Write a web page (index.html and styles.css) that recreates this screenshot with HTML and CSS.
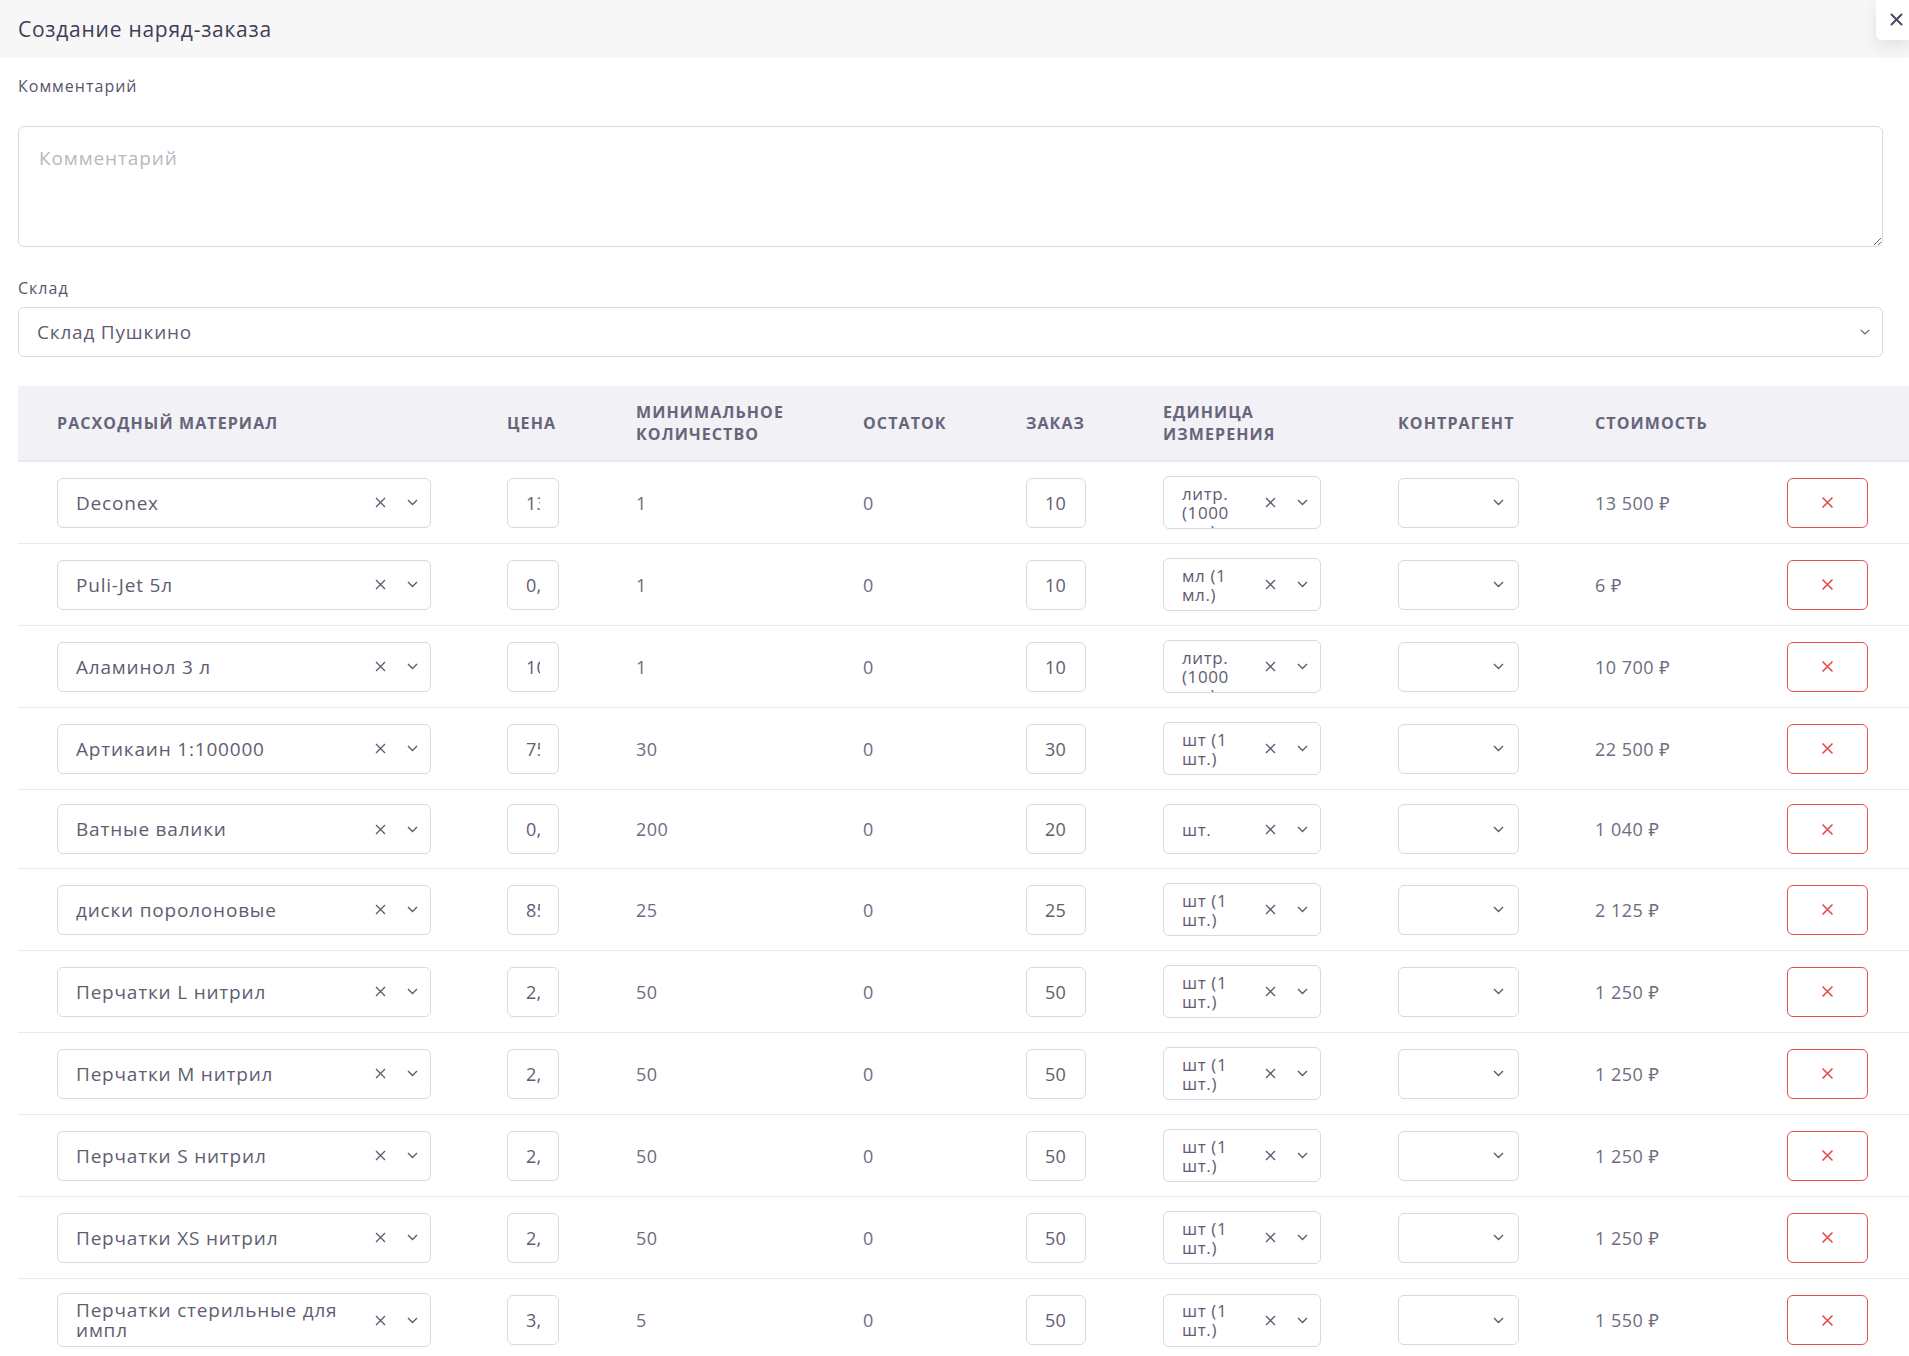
FILE: index.html
```html
<!DOCTYPE html>
<html lang="ru">
<head>
<meta charset="utf-8">
<title>Создание наряд-заказа</title>
<link rel="stylesheet" href="styles.css">
</head>
<body>
<div class="modal">
  <div class="modal-header">
    <h1 class="modal-title">Создание наряд-заказа</h1>
  </div>
  <button class="close-btn" type="button" aria-label="Закрыть">
    <svg width="13" height="13" viewBox="0 0 13 13"><path d="M1.5 1.5L11.5 11.5M11.5 1.5L1.5 11.5" stroke="currentColor" stroke-width="2" stroke-linecap="round"/></svg>
  </button>

  <div class="modal-body">
    <label class="field-label">Комментарий</label>
    <textarea class="textarea" placeholder="Комментарий"></textarea>

    <label class="field-label field-label--stock">Склад</label>
    <div class="select select--wide">
      <span class="select-value">Склад Пушкино</span>
      <span class="chevron chevron--wide"><svg width="13" height="8" viewBox="0 0 13 8"><path d="M1 1.2L6.5 6.5L12 1.2" fill="none" stroke="currentColor" stroke-width="1.5"/></svg></span>
    </div>

    <div class="table">
      <div class="trow thead">
        <div class="th">Расходный материал</div>
        <div class="th">Цена</div>
        <div class="th">Минимальное<br>количество</div>
        <div class="th">Остаток</div>
        <div class="th">Заказ</div>
        <div class="th">Единица<br>измерения</div>
        <div class="th">Контрагент</div>
        <div class="th">Стоимость</div>
        <div class="th"></div>
      </div>

      <div class="trow">
        <div class="td"><div class="select sel-mat"><span class="select-value">Deconex</span><span class="clear"><svg width="11" height="11" viewBox="0 0 11 11"><path d="M1 1L10 10M10 1L1 10" stroke="currentColor" stroke-width="1.3"/></svg></span><span class="chevron"><svg width="11" height="7" viewBox="0 0 11 7"><path d="M1 1L5.5 5.5L10 1" fill="none" stroke="currentColor" stroke-width="1.4"/></svg></span></div></div>
        <div class="td"><input class="num num--price" value="1350"></div>
        <div class="td val">1</div>
        <div class="td val">0</div>
        <div class="td"><input class="num num--order" value="10"></div>
        <div class="td"><div class="select sel-unit"><span class="select-value unit-value">литр. (1000 мл.)</span><span class="clear"><svg width="11" height="11" viewBox="0 0 11 11"><path d="M1 1L10 10M10 1L1 10" stroke="currentColor" stroke-width="1.3"/></svg></span><span class="chevron"><svg width="11" height="7" viewBox="0 0 11 7"><path d="M1 1L5.5 5.5L10 1" fill="none" stroke="currentColor" stroke-width="1.4"/></svg></span></div></div>
        <div class="td"><div class="select sel-agent"><span class="select-value"></span><span class="chevron"><svg width="11" height="7" viewBox="0 0 11 7"><path d="M1 1L5.5 5.5L10 1" fill="none" stroke="currentColor" stroke-width="1.4"/></svg></span></div></div>
        <div class="td val">13 500 ₽</div>
        <div class="td"><button class="del-btn" type="button"><svg width="13" height="13" viewBox="0 0 13 13"><path d="M1.5 1.5L11.5 11.5M11.5 1.5L1.5 11.5" stroke="currentColor" stroke-width="1.6"/></svg></button></div>
      </div>

      <div class="trow">
        <div class="td"><div class="select sel-mat"><span class="select-value">Puli-Jet 5л</span><span class="clear"><svg width="11" height="11" viewBox="0 0 11 11"><path d="M1 1L10 10M10 1L1 10" stroke="currentColor" stroke-width="1.3"/></svg></span><span class="chevron"><svg width="11" height="7" viewBox="0 0 11 7"><path d="M1 1L5.5 5.5L10 1" fill="none" stroke="currentColor" stroke-width="1.4"/></svg></span></div></div>
        <div class="td"><input class="num num--price" value="0,6"></div>
        <div class="td val">1</div>
        <div class="td val">0</div>
        <div class="td"><input class="num num--order" value="10"></div>
        <div class="td"><div class="select sel-unit"><span class="select-value unit-value">мл (1 мл.)</span><span class="clear"><svg width="11" height="11" viewBox="0 0 11 11"><path d="M1 1L10 10M10 1L1 10" stroke="currentColor" stroke-width="1.3"/></svg></span><span class="chevron"><svg width="11" height="7" viewBox="0 0 11 7"><path d="M1 1L5.5 5.5L10 1" fill="none" stroke="currentColor" stroke-width="1.4"/></svg></span></div></div>
        <div class="td"><div class="select sel-agent"><span class="select-value"></span><span class="chevron"><svg width="11" height="7" viewBox="0 0 11 7"><path d="M1 1L5.5 5.5L10 1" fill="none" stroke="currentColor" stroke-width="1.4"/></svg></span></div></div>
        <div class="td val">6 ₽</div>
        <div class="td"><button class="del-btn" type="button"><svg width="13" height="13" viewBox="0 0 13 13"><path d="M1.5 1.5L11.5 11.5M11.5 1.5L1.5 11.5" stroke="currentColor" stroke-width="1.6"/></svg></button></div>
      </div>

      <div class="trow">
        <div class="td"><div class="select sel-mat"><span class="select-value">Аламинол 3 л</span><span class="clear"><svg width="11" height="11" viewBox="0 0 11 11"><path d="M1 1L10 10M10 1L1 10" stroke="currentColor" stroke-width="1.3"/></svg></span><span class="chevron"><svg width="11" height="7" viewBox="0 0 11 7"><path d="M1 1L5.5 5.5L10 1" fill="none" stroke="currentColor" stroke-width="1.4"/></svg></span></div></div>
        <div class="td"><input class="num num--price" value="1070"></div>
        <div class="td val">1</div>
        <div class="td val">0</div>
        <div class="td"><input class="num num--order" value="10"></div>
        <div class="td"><div class="select sel-unit"><span class="select-value unit-value">литр. (1000 мл.)</span><span class="clear"><svg width="11" height="11" viewBox="0 0 11 11"><path d="M1 1L10 10M10 1L1 10" stroke="currentColor" stroke-width="1.3"/></svg></span><span class="chevron"><svg width="11" height="7" viewBox="0 0 11 7"><path d="M1 1L5.5 5.5L10 1" fill="none" stroke="currentColor" stroke-width="1.4"/></svg></span></div></div>
        <div class="td"><div class="select sel-agent"><span class="select-value"></span><span class="chevron"><svg width="11" height="7" viewBox="0 0 11 7"><path d="M1 1L5.5 5.5L10 1" fill="none" stroke="currentColor" stroke-width="1.4"/></svg></span></div></div>
        <div class="td val">10 700 ₽</div>
        <div class="td"><button class="del-btn" type="button"><svg width="13" height="13" viewBox="0 0 13 13"><path d="M1.5 1.5L11.5 11.5M11.5 1.5L1.5 11.5" stroke="currentColor" stroke-width="1.6"/></svg></button></div>
      </div>

      <div class="trow">
        <div class="td"><div class="select sel-mat"><span class="select-value">Артикаин 1:100000</span><span class="clear"><svg width="11" height="11" viewBox="0 0 11 11"><path d="M1 1L10 10M10 1L1 10" stroke="currentColor" stroke-width="1.3"/></svg></span><span class="chevron"><svg width="11" height="7" viewBox="0 0 11 7"><path d="M1 1L5.5 5.5L10 1" fill="none" stroke="currentColor" stroke-width="1.4"/></svg></span></div></div>
        <div class="td"><input class="num num--price" value="750"></div>
        <div class="td val">30</div>
        <div class="td val">0</div>
        <div class="td"><input class="num num--order" value="300"></div>
        <div class="td"><div class="select sel-unit"><span class="select-value unit-value">шт (1 шт.)</span><span class="clear"><svg width="11" height="11" viewBox="0 0 11 11"><path d="M1 1L10 10M10 1L1 10" stroke="currentColor" stroke-width="1.3"/></svg></span><span class="chevron"><svg width="11" height="7" viewBox="0 0 11 7"><path d="M1 1L5.5 5.5L10 1" fill="none" stroke="currentColor" stroke-width="1.4"/></svg></span></div></div>
        <div class="td"><div class="select sel-agent"><span class="select-value"></span><span class="chevron"><svg width="11" height="7" viewBox="0 0 11 7"><path d="M1 1L5.5 5.5L10 1" fill="none" stroke="currentColor" stroke-width="1.4"/></svg></span></div></div>
        <div class="td val">22 500 ₽</div>
        <div class="td"><button class="del-btn" type="button"><svg width="13" height="13" viewBox="0 0 13 13"><path d="M1.5 1.5L11.5 11.5M11.5 1.5L1.5 11.5" stroke="currentColor" stroke-width="1.6"/></svg></button></div>
      </div>

      <div class="trow">
        <div class="td"><div class="select sel-mat"><span class="select-value">Ватные валики</span><span class="clear"><svg width="11" height="11" viewBox="0 0 11 11"><path d="M1 1L10 10M10 1L1 10" stroke="currentColor" stroke-width="1.3"/></svg></span><span class="chevron"><svg width="11" height="7" viewBox="0 0 11 7"><path d="M1 1L5.5 5.5L10 1" fill="none" stroke="currentColor" stroke-width="1.4"/></svg></span></div></div>
        <div class="td"><input class="num num--price" value="0,52"></div>
        <div class="td val">200</div>
        <div class="td val">0</div>
        <div class="td"><input class="num num--order" value="2000"></div>
        <div class="td"><div class="select sel-unit"><span class="select-value unit-value">шт.</span><span class="clear"><svg width="11" height="11" viewBox="0 0 11 11"><path d="M1 1L10 10M10 1L1 10" stroke="currentColor" stroke-width="1.3"/></svg></span><span class="chevron"><svg width="11" height="7" viewBox="0 0 11 7"><path d="M1 1L5.5 5.5L10 1" fill="none" stroke="currentColor" stroke-width="1.4"/></svg></span></div></div>
        <div class="td"><div class="select sel-agent"><span class="select-value"></span><span class="chevron"><svg width="11" height="7" viewBox="0 0 11 7"><path d="M1 1L5.5 5.5L10 1" fill="none" stroke="currentColor" stroke-width="1.4"/></svg></span></div></div>
        <div class="td val">1 040 ₽</div>
        <div class="td"><button class="del-btn" type="button"><svg width="13" height="13" viewBox="0 0 13 13"><path d="M1.5 1.5L11.5 11.5M11.5 1.5L1.5 11.5" stroke="currentColor" stroke-width="1.6"/></svg></button></div>
      </div>

      <div class="trow">
        <div class="td"><div class="select sel-mat"><span class="select-value">диски поролоновые</span><span class="clear"><svg width="11" height="11" viewBox="0 0 11 11"><path d="M1 1L10 10M10 1L1 10" stroke="currentColor" stroke-width="1.3"/></svg></span><span class="chevron"><svg width="11" height="7" viewBox="0 0 11 7"><path d="M1 1L5.5 5.5L10 1" fill="none" stroke="currentColor" stroke-width="1.4"/></svg></span></div></div>
        <div class="td"><input class="num num--price" value="85"></div>
        <div class="td val">25</div>
        <div class="td val">0</div>
        <div class="td"><input class="num num--order" value="25"></div>
        <div class="td"><div class="select sel-unit"><span class="select-value unit-value">шт (1 шт.)</span><span class="clear"><svg width="11" height="11" viewBox="0 0 11 11"><path d="M1 1L10 10M10 1L1 10" stroke="currentColor" stroke-width="1.3"/></svg></span><span class="chevron"><svg width="11" height="7" viewBox="0 0 11 7"><path d="M1 1L5.5 5.5L10 1" fill="none" stroke="currentColor" stroke-width="1.4"/></svg></span></div></div>
        <div class="td"><div class="select sel-agent"><span class="select-value"></span><span class="chevron"><svg width="11" height="7" viewBox="0 0 11 7"><path d="M1 1L5.5 5.5L10 1" fill="none" stroke="currentColor" stroke-width="1.4"/></svg></span></div></div>
        <div class="td val">2 125 ₽</div>
        <div class="td"><button class="del-btn" type="button"><svg width="13" height="13" viewBox="0 0 13 13"><path d="M1.5 1.5L11.5 11.5M11.5 1.5L1.5 11.5" stroke="currentColor" stroke-width="1.6"/></svg></button></div>
      </div>

      <div class="trow">
        <div class="td"><div class="select sel-mat"><span class="select-value">Перчатки L нитрил</span><span class="clear"><svg width="11" height="11" viewBox="0 0 11 11"><path d="M1 1L10 10M10 1L1 10" stroke="currentColor" stroke-width="1.3"/></svg></span><span class="chevron"><svg width="11" height="7" viewBox="0 0 11 7"><path d="M1 1L5.5 5.5L10 1" fill="none" stroke="currentColor" stroke-width="1.4"/></svg></span></div></div>
        <div class="td"><input class="num num--price" value="2,5"></div>
        <div class="td val">50</div>
        <div class="td val">0</div>
        <div class="td"><input class="num num--order" value="500"></div>
        <div class="td"><div class="select sel-unit"><span class="select-value unit-value">шт (1 шт.)</span><span class="clear"><svg width="11" height="11" viewBox="0 0 11 11"><path d="M1 1L10 10M10 1L1 10" stroke="currentColor" stroke-width="1.3"/></svg></span><span class="chevron"><svg width="11" height="7" viewBox="0 0 11 7"><path d="M1 1L5.5 5.5L10 1" fill="none" stroke="currentColor" stroke-width="1.4"/></svg></span></div></div>
        <div class="td"><div class="select sel-agent"><span class="select-value"></span><span class="chevron"><svg width="11" height="7" viewBox="0 0 11 7"><path d="M1 1L5.5 5.5L10 1" fill="none" stroke="currentColor" stroke-width="1.4"/></svg></span></div></div>
        <div class="td val">1 250 ₽</div>
        <div class="td"><button class="del-btn" type="button"><svg width="13" height="13" viewBox="0 0 13 13"><path d="M1.5 1.5L11.5 11.5M11.5 1.5L1.5 11.5" stroke="currentColor" stroke-width="1.6"/></svg></button></div>
      </div>

      <div class="trow">
        <div class="td"><div class="select sel-mat"><span class="select-value">Перчатки M нитрил</span><span class="clear"><svg width="11" height="11" viewBox="0 0 11 11"><path d="M1 1L10 10M10 1L1 10" stroke="currentColor" stroke-width="1.3"/></svg></span><span class="chevron"><svg width="11" height="7" viewBox="0 0 11 7"><path d="M1 1L5.5 5.5L10 1" fill="none" stroke="currentColor" stroke-width="1.4"/></svg></span></div></div>
        <div class="td"><input class="num num--price" value="2,5"></div>
        <div class="td val">50</div>
        <div class="td val">0</div>
        <div class="td"><input class="num num--order" value="500"></div>
        <div class="td"><div class="select sel-unit"><span class="select-value unit-value">шт (1 шт.)</span><span class="clear"><svg width="11" height="11" viewBox="0 0 11 11"><path d="M1 1L10 10M10 1L1 10" stroke="currentColor" stroke-width="1.3"/></svg></span><span class="chevron"><svg width="11" height="7" viewBox="0 0 11 7"><path d="M1 1L5.5 5.5L10 1" fill="none" stroke="currentColor" stroke-width="1.4"/></svg></span></div></div>
        <div class="td"><div class="select sel-agent"><span class="select-value"></span><span class="chevron"><svg width="11" height="7" viewBox="0 0 11 7"><path d="M1 1L5.5 5.5L10 1" fill="none" stroke="currentColor" stroke-width="1.4"/></svg></span></div></div>
        <div class="td val">1 250 ₽</div>
        <div class="td"><button class="del-btn" type="button"><svg width="13" height="13" viewBox="0 0 13 13"><path d="M1.5 1.5L11.5 11.5M11.5 1.5L1.5 11.5" stroke="currentColor" stroke-width="1.6"/></svg></button></div>
      </div>

      <div class="trow">
        <div class="td"><div class="select sel-mat"><span class="select-value">Перчатки S нитрил</span><span class="clear"><svg width="11" height="11" viewBox="0 0 11 11"><path d="M1 1L10 10M10 1L1 10" stroke="currentColor" stroke-width="1.3"/></svg></span><span class="chevron"><svg width="11" height="7" viewBox="0 0 11 7"><path d="M1 1L5.5 5.5L10 1" fill="none" stroke="currentColor" stroke-width="1.4"/></svg></span></div></div>
        <div class="td"><input class="num num--price" value="2,5"></div>
        <div class="td val">50</div>
        <div class="td val">0</div>
        <div class="td"><input class="num num--order" value="500"></div>
        <div class="td"><div class="select sel-unit"><span class="select-value unit-value">шт (1 шт.)</span><span class="clear"><svg width="11" height="11" viewBox="0 0 11 11"><path d="M1 1L10 10M10 1L1 10" stroke="currentColor" stroke-width="1.3"/></svg></span><span class="chevron"><svg width="11" height="7" viewBox="0 0 11 7"><path d="M1 1L5.5 5.5L10 1" fill="none" stroke="currentColor" stroke-width="1.4"/></svg></span></div></div>
        <div class="td"><div class="select sel-agent"><span class="select-value"></span><span class="chevron"><svg width="11" height="7" viewBox="0 0 11 7"><path d="M1 1L5.5 5.5L10 1" fill="none" stroke="currentColor" stroke-width="1.4"/></svg></span></div></div>
        <div class="td val">1 250 ₽</div>
        <div class="td"><button class="del-btn" type="button"><svg width="13" height="13" viewBox="0 0 13 13"><path d="M1.5 1.5L11.5 11.5M11.5 1.5L1.5 11.5" stroke="currentColor" stroke-width="1.6"/></svg></button></div>
      </div>

      <div class="trow">
        <div class="td"><div class="select sel-mat"><span class="select-value">Перчатки XS нитрил</span><span class="clear"><svg width="11" height="11" viewBox="0 0 11 11"><path d="M1 1L10 10M10 1L1 10" stroke="currentColor" stroke-width="1.3"/></svg></span><span class="chevron"><svg width="11" height="7" viewBox="0 0 11 7"><path d="M1 1L5.5 5.5L10 1" fill="none" stroke="currentColor" stroke-width="1.4"/></svg></span></div></div>
        <div class="td"><input class="num num--price" value="2,5"></div>
        <div class="td val">50</div>
        <div class="td val">0</div>
        <div class="td"><input class="num num--order" value="500"></div>
        <div class="td"><div class="select sel-unit"><span class="select-value unit-value">шт (1 шт.)</span><span class="clear"><svg width="11" height="11" viewBox="0 0 11 11"><path d="M1 1L10 10M10 1L1 10" stroke="currentColor" stroke-width="1.3"/></svg></span><span class="chevron"><svg width="11" height="7" viewBox="0 0 11 7"><path d="M1 1L5.5 5.5L10 1" fill="none" stroke="currentColor" stroke-width="1.4"/></svg></span></div></div>
        <div class="td"><div class="select sel-agent"><span class="select-value"></span><span class="chevron"><svg width="11" height="7" viewBox="0 0 11 7"><path d="M1 1L5.5 5.5L10 1" fill="none" stroke="currentColor" stroke-width="1.4"/></svg></span></div></div>
        <div class="td val">1 250 ₽</div>
        <div class="td"><button class="del-btn" type="button"><svg width="13" height="13" viewBox="0 0 13 13"><path d="M1.5 1.5L11.5 11.5M11.5 1.5L1.5 11.5" stroke="currentColor" stroke-width="1.6"/></svg></button></div>
      </div>

      <div class="trow">
        <div class="td"><div class="select sel-mat"><span class="select-value">Перчатки стерильные для импл</span><span class="clear"><svg width="11" height="11" viewBox="0 0 11 11"><path d="M1 1L10 10M10 1L1 10" stroke="currentColor" stroke-width="1.3"/></svg></span><span class="chevron"><svg width="11" height="7" viewBox="0 0 11 7"><path d="M1 1L5.5 5.5L10 1" fill="none" stroke="currentColor" stroke-width="1.4"/></svg></span></div></div>
        <div class="td"><input class="num num--price" value="3,1"></div>
        <div class="td val">5</div>
        <div class="td val">0</div>
        <div class="td"><input class="num num--order" value="500"></div>
        <div class="td"><div class="select sel-unit"><span class="select-value unit-value">шт (1 шт.)</span><span class="clear"><svg width="11" height="11" viewBox="0 0 11 11"><path d="M1 1L10 10M10 1L1 10" stroke="currentColor" stroke-width="1.3"/></svg></span><span class="chevron"><svg width="11" height="7" viewBox="0 0 11 7"><path d="M1 1L5.5 5.5L10 1" fill="none" stroke="currentColor" stroke-width="1.4"/></svg></span></div></div>
        <div class="td"><div class="select sel-agent"><span class="select-value"></span><span class="chevron"><svg width="11" height="7" viewBox="0 0 11 7"><path d="M1 1L5.5 5.5L10 1" fill="none" stroke="currentColor" stroke-width="1.4"/></svg></span></div></div>
        <div class="td val">1 550 ₽</div>
        <div class="td"><button class="del-btn" type="button"><svg width="13" height="13" viewBox="0 0 13 13"><path d="M1.5 1.5L11.5 11.5M11.5 1.5L1.5 11.5" stroke="currentColor" stroke-width="1.6"/></svg></button></div>
      </div>
    </div>
  </div>
</div>
</body>
</html>
```

FILE: styles.css
```css
* { box-sizing: border-box; }

html, body {
  margin: 0;
  padding: 0;
  background: #ffffff;
  overflow: hidden;
  height: 1356px;
}

body {
  font-family: "Open Sans", "Noto Sans", sans-serif;
  color: #5f5d71;
}

.modal {
  position: relative;
  width: 1909px;
}

.modal-header {
  height: 58px;
  background: #f7f7f7;
  display: flex;
  align-items: center;
  padding-left: 18px;
}

.modal-title {
  margin: 0;
  font-size: 21px;
  font-weight: 500;
  color: #3f3d55;
  letter-spacing: 0.75px;
}

.close-btn {
  position: absolute;
  top: 0;
  right: 0;
  width: 33px;
  height: 40px;
  border: none;
  background: #fff;
  border-bottom-left-radius: 6px;
  box-shadow: 0 6px 16px rgba(40, 40, 60, 0.10);
  color: #4b4862;
  display: flex;
  align-items: center;
  justify-content: center;
  padding: 0 0 2px 8px;
}

.modal-body {
  padding: 18px 26px 0 18px;
  display: flex;
  flex-direction: column;
}

.field-label {
  font-size: 16px;
  line-height: 20px;
  color: #57556b;
  letter-spacing: 1px;
}

.field-label--stock {
  margin-top: 31px;
}

.textarea {
  margin-top: 30px;
  height: 121px;
  width: 100%;
  border: 1px solid #d9d8e3;
  border-radius: 6px;
  padding: 18px 20px;
  font-family: inherit;
  font-size: 19px;
  letter-spacing: 0.9px;
  color: #5f5d71;
  resize: vertical;
  outline: none;
}

.textarea::placeholder {
  color: #b8b7c4;
}

.select {
  display: flex;
  align-items: center;
  border: 1px solid #d9d8e3;
  border-radius: 6px;
  background: #fff;
  min-height: 50px;
  color: #5f5d71;
}

.select--wide {
  margin-top: 9px;
  height: 50px;
  padding-left: 18px;
}

.select-value {
  flex: 1;
  min-width: 0;
  font-size: 19px;
  line-height: 20px;
  letter-spacing: 0.8px;
}

.chevron, .clear {
  display: flex;
  align-items: center;
  justify-content: center;
  color: #5c5a70;
}

.chevron--wide {
  width: 40px;
  padding-right: 12px;
}

.table {
  margin-top: 29px;
  width: 1900px;
}

.trow {
  display: grid;
  grid-template-columns: 450px 129px 227px 163px 137px 235px 197px 192px 120px;
  align-items: center;
  padding-left: 39px;
  padding-top: 14px;
  padding-bottom: 14px;
  border-bottom: 1px solid #e9e9ef;
}

.thead {
  background: #f1f1f6;
  height: 76px;
  padding-top: 0;
  padding-bottom: 0;
  border-bottom: 2px solid #e8e8ef;
}

.th {
  font-size: 16px;
  line-height: 22px;
  font-weight: 700;
  text-transform: uppercase;
  letter-spacing: 1.1px;
  color: #67657a;
}

.td {
  display: flex;
  align-items: center;
}

.val {
  font-size: 18px;
  color: #6e6d7e;
  letter-spacing: 0.5px;
}

.sel-mat {
  width: 374px;
  padding-left: 18px;
  padding-right: 7px;
}

.sel-mat .select-value {
  padding: 6px 0;
}

.sel-unit {
  width: 158px;
  padding-left: 18px;
  padding-right: 7px;
}

.unit-value {
  max-height: 51px;
  padding: 6.5px 4px 6.5px 0;
  overflow: hidden;
  line-height: 19px;
  font-size: 17px;
  letter-spacing: 0.6px;
}

.sel-agent {
  width: 121px;
  padding-right: 9px;
}

.clear {
  width: 30px;
  height: 20px;
  margin-right: 6px;
}

.chevron {
  width: 22px;
  height: 20px;
}

.num {
  height: 50px;
  border: 1px solid #d9d8e3;
  border-radius: 6px;
  padding: 0 18px;
  font-family: inherit;
  font-size: 18px;
  letter-spacing: 0.3px;
  color: #5f5d71;
  background: #fff;
  outline: none;
}

.num--price { width: 52px; }
.num--order { width: 60px; }

.del-btn {
  width: 81px;
  height: 50px;
  border: 1px solid #e84f4f;
  border-radius: 6px;
  background: #fff;
  color: #e84a4a;
  display: flex;
  align-items: center;
  justify-content: center;
  padding: 0;
}
```
